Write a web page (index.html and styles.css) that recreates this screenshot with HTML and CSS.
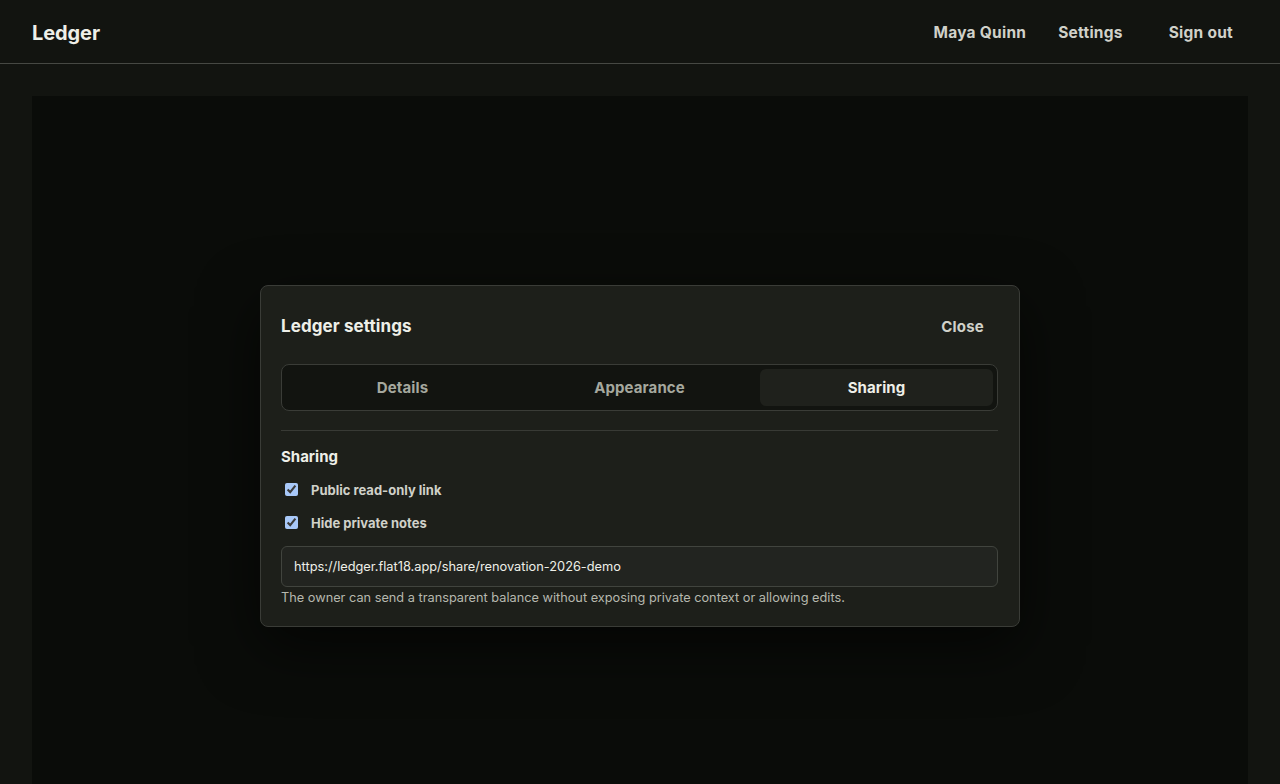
FILE: index.html
```html
<!DOCTYPE html>
<html lang="en">
<head>
  <meta charset="UTF-8">
  <title>Ledger</title>
  <link rel="stylesheet" href="styles.css">
</head>
<body>

  <header class="topbar">
    <div class="brand">Ledger</div>
    <nav class="nav">
      <a href="#">Maya Quinn</a>
      <a href="#">Settings</a>
      <button class="signout">Sign out</button>
    </nav>
  </header>

  <main class="page">
    <div class="backdrop">
      <div class="modal">
        <div class="modal-head">
          <h2>Ledger settings</h2>
          <button class="close">Close</button>
        </div>

        <div class="tabs">
          <button class="tab">Details</button>
          <button class="tab">Appearance</button>
          <button class="tab active">Sharing</button>
        </div>

        <div class="section">
          <h3>Sharing</h3>
          <label class="check"><input type="checkbox" checked> Public read-only link</label>
          <label class="check"><input type="checkbox" checked> Hide private notes</label>
          <input class="link" type="text" value="https://ledger.flat18.app/share/renovation-2026-demo" readonly>
          <p class="hint">The owner can send a transparent balance without exposing private context or allowing edits.</p>
        </div>
      </div>
    </div>
  </main>

</body>
</html>
```

FILE: styles.css
```css
* {
  box-sizing: border-box;
}
body {
  font-family: Inter, "Noto Sans", sans-serif;
  background: #121410;
  color: #ecede6;
  margin: 0;
  height: 784px;
  overflow: hidden;
}
.topbar {
  height: 64px;
  display: flex;
  align-items: center;
  justify-content: space-between;
  padding: 2px 32px 0;
  border-bottom: 1px solid #464843;
}
.brand {
  font-size: 20px;
  font-weight: 700;
  letter-spacing: -0.1px;
  color: #eeefe8;
}
.nav {
  display: flex;
  align-items: center;
  gap: 32px;
}
.nav a,
.signout {
  font-family: inherit;
  font-size: 15.5px;
  font-weight: 700;
  letter-spacing: 0.25px;
  color: #d0d1c9;
  text-decoration: none;
}
.signout {
  background: none;
  border: none;
  padding: 8px 15px 8px 14px;
}
.page {
  padding: 32px 32px 0;
}
.backdrop {
  background: #0a0c09;
  height: 720px;
  display: flex;
  justify-content: center;
  padding-top: 189px;
}
.modal {
  width: 760px;
  height: 342px;
  background: #1d1f1a;
  border: 1px solid #3a3c37;
  border-radius: 8px;
  padding: 20px 21px 20px 20px;
  box-shadow: 0 20px 60px rgba(0,0,0,0.6);
}
.modal-head {
  display: flex;
  justify-content: space-between;
  align-items: center;
  height: 40px;
}
.modal-head h2 {
  margin: 0;
  font-size: 17px;
  font-weight: 700;
  letter-spacing: 0.1px;
  color: #eeefe8;
}
.close {
  font-family: inherit;
  background: none;
  border: none;
  color: #d0d1c9;
  font-size: 15px;
  font-weight: 700;
  letter-spacing: 0.2px;
  padding: 8px 14px;
}
.tabs {
  margin-top: 18px;
  height: 47px;
  display: grid;
  grid-template-columns: 1fr 1fr 1fr;
  gap: 4px;
  padding: 4px;
  background: #121410;
  border: 1px solid #3a3c37;
  border-radius: 8px;
}
.tab {
  font-family: inherit;
  background: none;
  border: none;
  border-radius: 6px;
  font-size: 15px;
  font-weight: 700;
  letter-spacing: 0.1px;
  color: #a5a89e;
}
.tab.active {
  background: #1f211c;
  color: #eeefe8;
}
.section {
  margin-top: 19px;
  border-top: 1px solid #383a35;
  padding-top: 16px;
}
.section h3 {
  margin: 0 0 7px;
  font-size: 15px;
  font-weight: 700;
  color: #eeefe8;
}
.check {
  display: flex;
  align-items: center;
  gap: 13px;
  height: 33px;
  font-size: 13px;
  font-weight: 700;
  color: #d0d1c9;
}
.check input {
  width: 13px;
  height: 13px;
  margin: 0 0 0 4px;
  accent-color: #a8c8f8;
}
.link {
  display: block;
  width: 100%;
  height: 41px;
  margin-top: 7px;
  padding: 0 12px;
  font-family: inherit;
  font-size: 12.8px;
  color: #eeefe8;
  background: #222420;
  border: 1px solid #41443e;
  border-radius: 6px;
}
.hint {
  margin: 3px 0 0;
  font-size: 12.75px;
  color: #b6b8ae;
}
```
